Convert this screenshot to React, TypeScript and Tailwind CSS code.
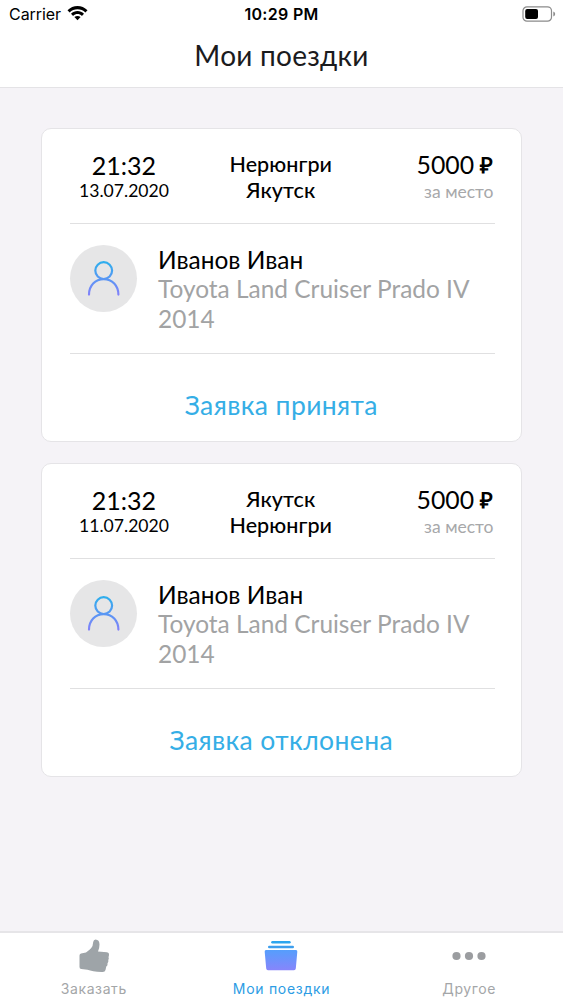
type Trip = {
  date: string;
  from: string;
  to: string;
  status: string;
};

const trips: Trip[] = [
  { date: "13.07.2020", from: "Нерюнгри", to: "Якутск", status: "Заявка принята" },
  { date: "11.07.2020", from: "Якутск", to: "Нерюнгри", status: "Заявка отклонена" },
];

function StatusBar() {
  return (
    <div className="grid h-7 grid-cols-3 items-center pl-[9px] pr-[7px] font-['Inter',sans-serif] text-black">
      <div className="flex items-center gap-[6px] text-[16px] tracking-[-0.05px]">
        <span>Carrier</span>
        <svg width="21" height="16" viewBox="0 0 21 16" className="-mt-[2px]">
          <path d="M.5 5.2C6-.5 15-.5 20.500 5.200L18.400 7.400C14.200 3.100 6.800 3.100 2.600 7.400Z" />
          <path d="M4 8.700C7.600 5 13.400 5 17 8.700L14.900 10.900C12.400 8.400 8.600 8.400 6.100 10.900Z" />
          <path d="M7.400 12.100C9.200 10.500 11.800 10.500 13.600 12.100L10.500 15.300Z" />
        </svg>
      </div>
      <div className="-ml-[2px] text-center text-[16px] font-semibold whitespace-nowrap tracking-[0.3px]">10:29 PM</div>
      <svg width="34" height="16" viewBox="0 0 34 16" className="justify-self-end">
        <rect x="1" y=".8" width="28.500" height="14.400" rx="4" fill="none" stroke="#8b8b8b" strokeWidth="1.200" />
        <rect x="3.200" y="3" width="12.800" height="10" rx="2" />
        <path d="M31.300 5.500Q33.200 6.300 33.200 8T31.300 10.500Z" fill="#8b8b8b" />
      </svg>
    </div>
  );
}

function Avatar() {
  return (
    <div className="flex size-[67px] shrink-0 items-center justify-center rounded-full bg-[#e6e6e7]">
      <svg width="34" height="38" viewBox="0 0 34 38" fill="none" stroke="url(#person)" strokeWidth="2.200" strokeLinecap="round">
        <defs>
          <linearGradient id="person" gradientUnits="userSpaceOnUse" x1="0" y1="2" x2="0" y2="36">
            <stop offset="0" stopColor="#2eaeed" />
            <stop offset="1" stopColor="#8580fa" />
          </linearGradient>
        </defs>
        <circle cx="16.700" cy="10.600" r="8.400" />
        <path d="M2 34.600C2 25.600 8.200 19.100 16.700 19.100S31.400 25.600 31.400 34.600" />
      </svg>
    </div>
  );
}

function TripCard({ trip }: { trip: Trip }) {
  return (
    <article className="flex h-[314px] flex-col rounded-[10px] border border-[#e5e4e7] bg-white pr-[26.5px] pl-[28px]">
      <div className="flex h-[95px] justify-between border-b border-[#e0e0e1] pt-[21px]">
        <div className="-ml-px w-[110px] text-center">
          <div className="text-[25px] leading-[30px]">21:32</div>
          <div className="text-[17.6px] leading-[21px]">{trip.date}</div>
        </div>
        <div className="-ml-[3px] pt-px text-center text-[21.5px] leading-[26px] font-medium tracking-[0.05px]">
          <div>{trip.from}</div>
          <div>{trip.to}</div>
        </div>
        <div className="w-[109px] pr-[1px] text-right">
          <div className="h-[30px] text-[24.800px] leading-[30px] whitespace-nowrap">
            5000 <span className="align-[1px] text-[22px] leading-none font-bold">₽</span>
          </div>
          <div className="text-[17.5px] leading-[23px] text-[#a7a8aa]">за место</div>
        </div>
      </div>
      <div className="flex h-[130px] gap-[21px] border-b border-[#e0e0e1] pt-5">
        <div className="pt-px">
          <Avatar />
        </div>
        <div className="pt-px text-[24.450px] leading-[29.300px]">
          <div>Иванов Иван</div>
          <div className="text-[#a2a3a4]">Toyota Land Cruiser Prado IV<br />2014</div>
        </div>
      </div>
      <div className="-ml-[2px] flex h-[87px] items-center justify-center pt-[17px] text-[26.5px] tracking-[0.4px] text-[#35aee6]">
        {trip.status}
      </div>
    </article>
  );
}

function TabBar() {
  return (
    <nav className="grid h-[69px] grid-cols-3 border-t-2 border-[#e6e5e8] bg-white font-['Inter',sans-serif] text-[14px] tracking-[0.6px] text-[#a4a6a8]">
      <div className="flex flex-col items-center">
        <svg width="32" height="34" viewBox="0 0 32 34" className="mt-[6px]" fill="#9ea4a8">
          <path d="M1.500 16.500Q1.500 15 3 14.500L8 13.500C10.500 11.500 13.500 9.500 14.500 7L15.200 3Q15.600 .5 17.500 .5Q21.500 .7 21.500 5.500Q21.500 9 20 12.500L29 13.200Q31.300 13.400 31 15.500Q31 17 30.500 18Q31.200 19.500 30.300 21Q30.700 22.800 29.500 24.200Q30 26.500 28.300 27.500L27.500 31Q27 33 24.800 33C18 33.200 13 31.800 9.500 30.800L3.300 30Q1.500 29.800 1.500 28Z" />
        </svg>
        <span className="mt-[6px] leading-[20px]">Заказать</span>
      </div>
      <div className="flex flex-col items-center text-[#2c9ce4]">
        <svg width="34" height="34" viewBox="0 0 34 34" className="mt-[6px]">
          <defs>
            <linearGradient id="folder" x1="0" y1="0" x2="0" y2="1">
              <stop offset="0" stopColor="#559efc" />
              <stop offset="1" stopColor="#8785fb" />
            </linearGradient>
          </defs>
          <rect x="7.200" y="2" width="19.500" height="2.500" rx="1.200" fill="#2ca5ee" />
          <rect x="4" y="6.800" width="26" height="2.400" rx="1.200" fill="#3d9eed" />
          <path d="M2 11H32Q33.500 11 33.300 12.800L31.800 29.600Q31.600 31.300 30 31.300H4Q2.400 31.300 2.200 29.600L.7 12.800Q.5 11 2 11Z" fill="url(#folder)" />
        </svg>
        <span className="mt-[6px] leading-[20px] tracking-[0.7px]">Мои поездки</span>
      </div>
      <div className="flex flex-col items-center">
        <svg width="34" height="34" viewBox="0 0 34 34" className="mt-[6px]" fill="#9b9da0">
          <circle cx="4.500" cy="17" r="4.100" />
          <circle cx="17" cy="17" r="4.100" />
          <circle cx="29.500" cy="17" r="4.100" />
        </svg>
        <span className="mt-[6px] leading-[20px]">Другое</span>
      </div>
    </nav>
  );
}

export default function App() {
  return (
    <div className="flex h-[1000px] w-[563px] flex-col overflow-hidden bg-[#f5f3f7] font-['Lato',sans-serif] text-black">
      <header className="h-[88px] border-b border-[#e4e3e6] bg-white">
        <StatusBar />
        <h1 className="text-center text-[28px] leading-[54px] tracking-[0.25px] text-[#1b1b1d]">Мои поездки</h1>
      </header>
      <main className="flex flex-1 flex-col gap-[21px] pt-10 pr-[41px] pl-[41px]">
        {trips.map((trip) => (
          <TripCard key={trip.date} trip={trip} />
        ))}
      </main>
      <TabBar />
    </div>
  );
}
